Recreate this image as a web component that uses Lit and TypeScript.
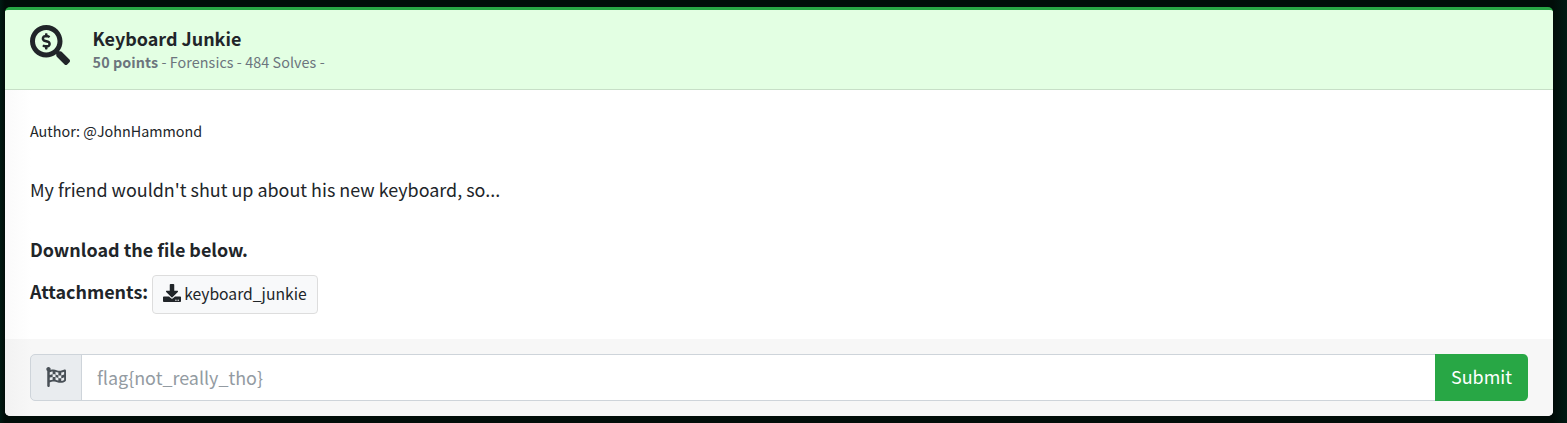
import { LitElement, html, css } from "lit";
import { customElement, property } from "lit/decorators.js";

const ICONS: Record<string, string> = {
  search:
    "M505.04 442.66l-99.71-99.69c-4.5-4.5-10.6-7-17-7h-16.3c27.6-35.3 44-79.69 44-127.99C416.03 93.09 322.92 0 208.02 0S0 93.09 0 207.98s93.11 207.98 208.02 207.98c48.3 0 92.71-16.4 128.01-44v16.3c0 6.4 2.5 12.5 7 17l99.71 99.69c9.4 9.4 24.6 9.4 33.9 0l28.3-28.3c9.4-9.4 9.4-24.59.1-33.99zm-297.02-90.7c-79.54 0-144-64.34-144-143.98 0-79.53 64.35-143.98 144-143.98 79.54 0 144 64.34 144 143.98 0 79.53-64.35 143.98-144 143.98zm27.11-152.54l-45.01-13.5c-5.16-1.55-8.77-6.78-8.77-12.73 0-7.27 5.3-13.19 11.8-13.19h28.1c4.56 0 8.96 1.29 12.82 3.72 3.24 2.03 7.36 1.91 10.13-.73l11.75-11.21c3.53-3.37 3.33-9.21-.57-12.14-9.1-6.83-20.08-10.77-31.37-11.35V112c0-4.42-3.58-8-8-8h-16c-4.42 0-8 3.58-8 8v16.12c-23.63.63-42.68 20.55-42.68 45.07 0 19.97 12.99 37.81 31.58 43.39l45.01 13.5c5.16 1.55 8.77 6.78 8.77 12.73 0 7.27-5.3 13.19-11.8 13.19h-28.1c-4.56 0-8.96-1.29-12.82-3.72-3.24-2.03-7.36-1.91-10.13.73l-11.75 11.21c-3.53 3.37-3.33 9.21.57 12.14 9.1 6.83 20.08 10.77 31.37 11.35V304c0 4.42 3.58 8 8 8h16c4.42 0 8-3.58 8-8v-16.12c23.63-.63 42.68-20.54 42.68-45.07 0-19.97-12.99-37.81-31.59-43.39z",
  download:
    "M216 0h80c13.3 0 24 10.7 24 24v168h87.7c17.8 0 26.7 21.5 14.1 34.1L269.7 378.3c-7.5 7.5-19.8 7.5-27.3 0L90.1 226.1c-12.6-12.6-3.7-34.1 14.1-34.1H192V24c0-13.3 10.7-24 24-24zm296 376v112c0 13.3-10.7 24-24 24H24c-13.3 0-24-10.7-24-24V376c0-13.3 10.7-24 24-24h146.7l49 49c20.1 20.1 52.5 20.1 72.6 0l49-49H488c13.3 0 24 10.7 24 24zm-124 88c0-11-9-20-20-20s-20 9-20 20 9 20 20 20 20-9 20-20zm64 0c0-11-9-20-20-20s-20 9-20 20 9 20 20 20 20-9 20-20z",
  flag:
    "M243.2 189.9V258c26.1 5.9 49.3 15.6 73.6 22.3v-68.2c-26-5.8-49.4-15.5-73.6-22.2zm223.3-123c-34.3 15.9-76.5 31.9-117 31.9C296 98.8 251.7 64 184.3 64c-25 0-47.3 4.4-68 12 2.8-7.3 4.1-15.2 3.6-23.6C118.1 24 94.8 1.2 66.3 0 34.3-1.3 8 24.3 8 56c0 19 9.5 35.8 24 45.9V488c0 13.3 10.7 24 24 24h16c13.3 0 24-10.7 24-24v-94.4c28.3-12.1 63.6-22.1 114.4-22.1 53.6 0 97.8 34.8 165.2 34.8 48.2 0 86.7-16.3 122.5-40.9 8.7-6 13.8-15.8 13.8-26.4V95.9c.1-23.3-24.2-38.8-45.4-29zM169.6 325.5c-25.8 2.7-50 8.2-73.6 16.6v-70.5c26.2-9.3 47.5-15 73.6-17.4v71.3zM464 191c-23.6 9.8-46.3 19.5-73.6 23.9V286c24.8-3.4 51.4-11.8 73.6-26v70.5c-25.1 16.1-48.5 24.7-73.6 27.1V286c-27 3.7-47.9 1.5-73.6-5.6v67.4c-23.9-7.4-47.3-16.7-73.6-21.3V258c-19.7-4.4-40.8-6.8-73.6-3.8v-70c-22.4 3.1-44.6 10.2-73.6 20.9v-70.5c33.2-12.2 50.1-19.8 73.6-22v71.6c27-3.7 48.4-1.3 73.6 5.7v-67.4c23.7 7.4 47.2 16.7 73.6 21.3v68.4c23.7 5.3 47.6 6.9 73.6 2.7V143c27-4.8 52.3-13.6 73.6-22.5z",
};

@customElement("ui-icon")
export class UiIcon extends LitElement {
  @property() name = "search";

  static styles = css`
    :host { display: block; flex: none; }
    svg { display: block; width: 100%; height: 100%; fill: currentColor; }
  `;

  render() {
    return html`<svg viewBox="0 0 512 512" aria-hidden="true"><path d=${ICONS[this.name]}></path></svg>`;
  }
}

@customElement("app-root")
export class AppRoot extends LitElement {
  static styles = css`
    :host {
      display: block;
      box-sizing: border-box;
      height: 423px;
      padding: 7px 14px 7px 5px;
      background: linear-gradient(90deg, #001a12 0, #010d09 5px, #010d09 1553px, #001a13 1567px);
      color: #212529;
      font: 400 17.93px/30px "Noto Sans CJK SC", "Noto Sans", sans-serif;
      white-space: nowrap;
    }
    * { box-sizing: border-box; }
    p { margin: 0; }
    .card {
      display: flex;
      flex-direction: column;
      height: 409px;
      overflow: hidden;
      border-top: 3px solid #28a745;
      border-radius: 5px;
      background: #fff;
    }
    .header {
      display: flex;
      gap: 22.6px;
      height: 80px;
      flex: none;
      padding: 15px 25px;
      border-bottom: 1px solid #c7dfc7;
      background: #e3ffe3;
    }
    .header ui-icon { width: 40px; height: 40px; }
    .title { font-weight: 700; line-height: 26px; }
    .meta { color: #6c757d; font-size: 14.35px; line-height: 22px; letter-spacing: 0.07px; }
    .body { flex: 1; padding: 24px 25px 25px; background: linear-gradient(90deg, #fafafa, #fff 26px); }
    .author { margin-top: 2px; font-size: 14.35px; }
    .text { margin-top: 28px; }
    .strong { margin-top: 30px; font-weight: 700; }
    .attachments { display: flex; gap: 4px; font-weight: 700; }
    .label { padding-top: 12px; }
    .file {
      display: flex;
      align-items: center;
      gap: 3px;
      height: 39px;
      margin-top: 11px;
      padding: 0 10.6px 2px 10px;
      border: 1px solid #ddd;
      border-radius: 4px;
      background: #f8f9fa;
      font-size: 15.7px;
      font-weight: 400;
    }
    .file ui-icon { width: 18px; height: 18px; margin-bottom: 1px; }
    .footer {
      display: flex;
      flex: none;
      height: 77px;
      padding: 15px 25px;
      background: linear-gradient(90deg, #f2f2f2, #f7f7f7 26px);
    }
    .addon {
      display: flex;
      align-items: center;
      justify-content: center;
      width: 52px;
      padding-bottom: 1px;
      border: 1px solid #ced4da;
      border-radius: 5px 0 0 5px;
      background: #e9ecef;
      color: #495057;
    }
    .addon ui-icon { width: 20px; height: 20px; }
    .field {
      flex: 1;
      min-width: 0;
      margin-left: -1px;
      padding: 0 15px 1px;
      border: 1px solid #ced4da;
      border-right: 0;
      border-radius: 0;
      outline: 0;
      background: #fff;
      color: #495057;
      font: inherit;
    }
    .field::placeholder { color: #939ba2; opacity: 1; }
    .submit {
      width: 93px;
      padding: 0 0 3px;
      border: 0;
      border-radius: 0 5px 5px 0;
      background: #28a745;
      color: #fff;
      font: inherit;
    }
  `;

  render() {
    return html`
      <section class="card">
        <header class="header">
          <ui-icon name="search"></ui-icon>
          <div>
            <p class="title">Keyboard Junkie</p>
            <p class="meta"><b>50 points</b> - Forensics - 484 Solves -</p>
          </div>
        </header>
        <div class="body">
          <p class="author">Author: @JohnHammond</p>
          <p class="text">My friend wouldn't shut up about his new keyboard, so...</p>
          <p class="strong">Download the file below.</p>
          <div class="attachments">
            <span class="label">Attachments:</span>
            <a class="file"><ui-icon name="download"></ui-icon><span>keyboard_junkie</span></a>
          </div>
        </div>
        <footer class="footer">
          <span class="addon"><ui-icon name="flag"></ui-icon></span>
          <input class="field" placeholder="flag{not_really_tho}" />
          <button class="submit">Submit</button>
        </footer>
      </section>
    `;
  }
}
